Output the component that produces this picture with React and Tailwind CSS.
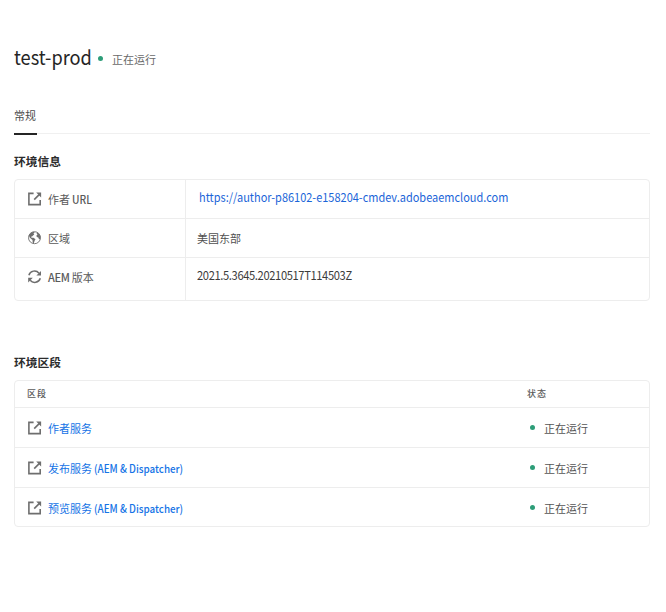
function OpenIcon() {
  return (
    <svg className="block h-[14px] w-[14px] shrink-0" viewBox="0 0 14 14" fill="none" stroke="#6e6e6e" strokeWidth="1.6">
      <path d="M5.6 1.4H.9v11.2h11.3V8" />
      <path d="M6.2 7.6 11.2 2.6" />
      <path d="M8.2 0.6h4.9v4.9z" fill="#6e6e6e" stroke="none" />
    </svg>
  );
}

function GlobeIcon() {
  return (
    <svg className="block h-[14px] w-[14px] shrink-0" viewBox="0 0 14 14">
      <circle cx="6.5" cy="6.7" r="6" fill="none" stroke="#6e6e6e" strokeWidth="0.9" />
      <path
        fill="#6e6e6e"
        d="M.9 4.3 2.8 1.8 5.6.8l1.2 1-1.4.8.9.9-1.3.9-.9 1.2-1.2.1.7 1 1.9.1 2 1.5-.9 1.5-.9 2.9-1-.9-.2-2.7-1.2-1L1.6 6.4zM8.8 1.2l2.6 1.7 1.2 3-.6 2.3-1.1-.2-.6-1.5-1.5-.5-.4-1.4 1.2-1.1-.9-.8z"
      />
    </svg>
  );
}

function RefreshIcon() {
  return (
    <svg className="block h-[14px] w-[14px] shrink-0" viewBox="0 0 14 14" fill="none" stroke="#6e6e6e" strokeWidth="1.5">
      <path d="M.9 5.2A5.8 5.8 0 0 1 11 3.2" />
      <path d="M12.3 8.2A5.8 5.8 0 0 1 2.2 10.2" />
      <path d="M13 1v4.6H8.4z" fill="#6e6e6e" stroke="none" />
      <path d="M.2 12.4V7.8h4.6z" fill="#6e6e6e" stroke="none" />
    </svg>
  );
}

function Dot({ className = "" }) {
  return <span className={`block h-[5px] w-[5px] shrink-0 rounded-full bg-[#2d9d78] ${className}`} />;
}

function InfoRow({ icon, label, className = "", children }) {
  return (
    <div className={`flex ${className}`}>
      <div className="flex w-[171px] shrink-0 items-start border-r border-[#ededed] pt-[12px] pl-[13px]">
        {icon}
        <span className="-mt-px ml-[6px] text-[11px] leading-[16px] text-[#5a5a5a]">{label}</span>
      </div>
      {children}
    </div>
  );
}

const segments = [
  { name: "作者服务", suffix: "" },
  { name: "发布服务", suffix: "(AEM & Dispatcher)" },
  { name: "预览服务", suffix: "(AEM & Dispatcher)" },
];

export default function App() {
  return (
    <main className="h-[612px] w-[666px] bg-white pr-[16px] pl-[14px] font-['Noto_Sans_CJK_SC',sans-serif] whitespace-nowrap">
      <header className="flex pt-[43px]">
        <h1 className="w-[78px] text-[20px] leading-[28px] text-[#252525]">
          <span className="inline-block origin-left scale-x-[0.91]">test-prod</span>
        </h1>
        <Dot className="mt-[13px] ml-[6px]" />
        <span className="mt-[8px] ml-[9px] text-[11px] leading-[16px] text-[#6a6a6a]">正在运行</span>
      </header>

      <nav className="mt-[36px] flex h-[27px] border-b border-[#f0f0f0]">
        <span className="h-[28px] w-[23px] border-b-2 border-[#252525] text-[11px] leading-[16px] text-[#4b4b4b]">常规</span>
      </nav>

      <h2 className="mt-[18px] text-[11.75px] leading-[18px] font-bold text-[#2c2c2c]">环境信息</h2>
      <section className="mt-[9px] h-[122px] rounded-[4px] border border-[#ededed]">
        <InfoRow
          className="h-[39px] border-b border-[#ededed]"
          icon={<OpenIcon />}
          label={<>作者 <span className="inline-block origin-left scale-x-[0.93] font-medium">URL</span></>}
        >
          <a className="pt-[8px] pl-[13px] text-[12px] leading-[18px] text-[#1b65d8]">
            <span className="inline-block origin-left scale-x-[0.915]">https://author-p86102-e158204-cmdev.adobeaemcloud.com</span>
          </a>
        </InfoRow>
        <InfoRow className="h-[39px] border-b border-[#ededed]" icon={<GlobeIcon />} label="区域">
          <span className="pt-[11px] pl-[11px] text-[11px] leading-[16px] text-[#505050]">美国东部</span>
        </InfoRow>
        <InfoRow
          className="h-[42px]"
          icon={<RefreshIcon />}
          label={<><span className="font-medium tracking-[-0.4px]">AEM</span> 版本</>}
        >
          <span className="pt-[8px] pl-[11px] text-[12px] leading-[18px] text-[#3c3c3c]">
            <span className="inline-block origin-left scale-x-[0.93] tracking-[-0.4px]">2021.5.3645.20210517T114503Z</span>
          </span>
        </InfoRow>
      </section>

      <h2 className="mt-[52px] text-[11.75px] leading-[18px] font-bold text-[#2c2c2c]">环境区段</h2>
      <section className="mt-[9px] h-[147px] rounded-[4px] border border-[#ededed]">
        <div className="flex h-[27px] items-center border-b border-[#ededed] pl-[12px] text-[9px] font-medium tracking-[1px] text-[#5a5a5a]">
          <span className="w-[500px]">区段</span>
          <span>状态</span>
        </div>
        {segments.map(({ name, suffix }) => (
          <div key={name} className="flex h-[40px] items-center border-b border-[#ededed] pl-[13px] last:h-[39px] last:border-b-0">
            <div className="flex w-[502px] items-center">
              <OpenIcon />
              <a className="ml-[6px] text-[11px] leading-[16px] text-[#1473e6]">
                {name} <span className="inline-block origin-left scale-x-[0.895] font-medium">{suffix}</span>
              </a>
            </div>
            <Dot />
            <span className="ml-[9px] text-[11px] leading-[16px] text-[#555]">正在运行</span>
          </div>
        ))}
      </section>
    </main>
  );
}
